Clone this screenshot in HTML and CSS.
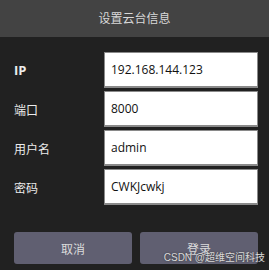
FILE: index.html
```html
<!DOCTYPE html>
<html lang="zh">
<head>
    <meta charset="UTF-8">
    <title>设置云台信息</title>
    <link rel="stylesheet" href="styles.css">
</head>
<body>
    <div class="dialog">
        <header class="title-bar">设置云台信息</header>

        <form class="form">
            <div class="row">
                <label class="label label-bold">IP</label>
                <input class="field" type="text" value="192.168.144.123">
            </div>
            <div class="row">
                <label class="label">端口</label>
                <input class="field" type="text" value="8000">
            </div>
            <div class="row">
                <label class="label">用户名</label>
                <input class="field" type="text" value="admin">
            </div>
            <div class="row">
                <label class="label">密码</label>
                <input class="field" type="text" value="CWKJcwkj">
            </div>
        </form>

        <div class="actions">
            <button class="btn">取消</button>
            <button class="btn">登录</button>
        </div>
    </div>

    <span class="watermark">CSDN @超维空间科技</span>
</body>
</html>
```

FILE: styles.css
```css
body {
    margin: 0;
    background-color: #212121;
    font-family: "Noto Sans", "Noto Sans CJK SC", sans-serif;
    width: 269px;
    height: 270px;
    overflow: hidden;
    position: relative;
}
.title-bar {
    height: 37px;
    line-height: 36px;
    background-color: #434343;
    color: #d8d8d8;
    text-align: center;
    font-size: 12px;
    font-family: "Noto Sans CJK SC", sans-serif;
}
.form {
    display: flex;
    flex-direction: column;
    gap: 3px;
    padding: 15px 11px 0 14px;
    margin: 0;
}
.row {
    display: grid;
    grid-template-columns: 90px 154px;
    align-items: center;
    height: 36px;
}
.label {
    color: #ececec;
    font-size: 12px;
    font-family: "Noto Sans CJK SC", sans-serif;
}
.label-bold {
    font-family: "Open Sans", sans-serif;
    font-weight: bold;
    font-size: 13px;
}
.field {
    box-sizing: border-box;
    width: 154px;
    height: 36px;
    border: 1px solid #8a8a8a;
    border-bottom-width: 2px;
    background-color: #fff;
    color: #111;
    font-family: "Open Sans", sans-serif;
    font-size: 12px;
    padding: 0 0 0 6px;
    outline: none;
}
.actions {
    display: flex;
    gap: 8px;
    padding: 27px 11px 0 14px;
}
.btn {
    width: 118px;
    height: 32px;
    border: none;
    border-radius: 3px;
    background-color: #605f71;
    color: #dcdcdc;
    font-size: 12px;
    font-family: "Noto Sans CJK SC", sans-serif;
}
.watermark {
    position: absolute;
    right: 4px;
    bottom: 6px;
    color: #d9d9d9;
    font-size: 10px;
    font-family: "Liberation Sans", "Noto Sans CJK SC", sans-serif;
    text-shadow: 0 0 2px #333;
}
```
